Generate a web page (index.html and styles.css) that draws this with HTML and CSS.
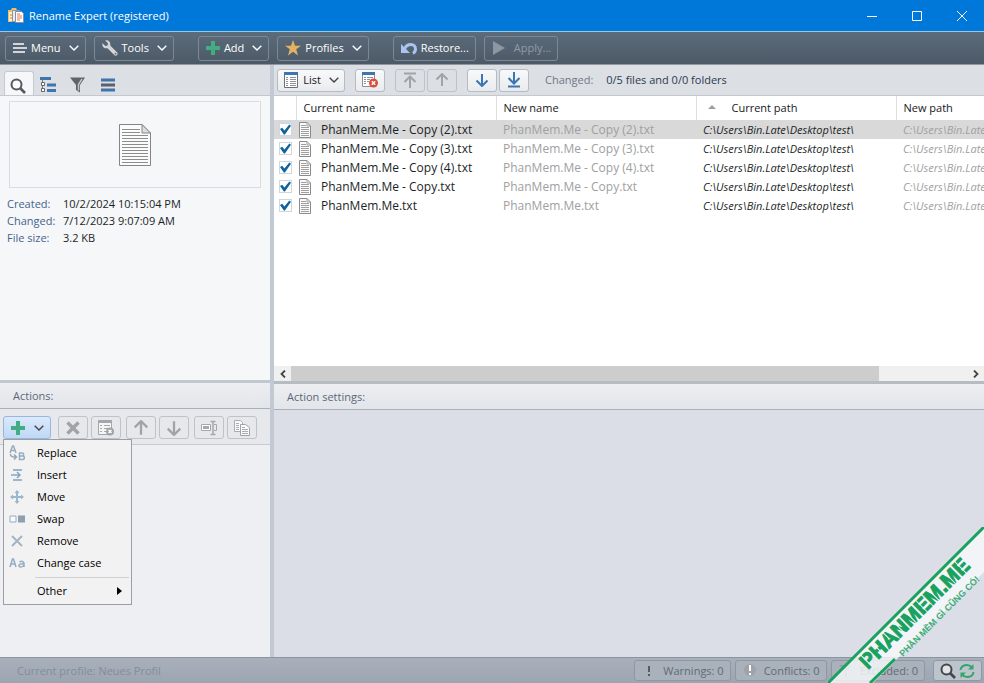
FILE: index.html
```
<!DOCTYPE html>
<html lang="en">
<head>
<meta charset="utf-8">
<title>Rename Expert</title>
<link rel="stylesheet" href="styles.css">
</head>
<body>
<svg class="defs" aria-hidden="true">
  <symbol id="chevron" viewBox="0 0 10 6"><path d="M.7.7 5 5 9.300.7" fill="none" stroke="currentColor" stroke-width="1.400"/></symbol>
  <symbol id="file" viewBox="0 0 32 42"><path d="M.5.5H23l8.500 8.500v32.500H.5z" fill="#fbfbfb" stroke="#858585"/><path d="M23 .5V9h8.500z" fill="#ddd" stroke="#858585"/><path d="M3 5.500h18M3 8.500h18M3 11.500h26M3 14.500h26M3 17.500h26M3 20.500h26M3 23.500h26M3 26.500h26M3 29.500h26M3 32.500h26M3 35.500h26M3 38.500h26" stroke="#8d8d8d"/></symbol>
  <symbol id="smallfile" viewBox="0 0 12 16"><path d="M.5.5H8l3.500 3.500v11.500H.5z" fill="#fafafa" stroke="#8b8b8b"/><path d="M8 .5V4h3.500M2 3.500h5M2 5.500h8M2 7.500h8M2 9.500h8M2 11.500h8M2 13.500h8" fill="none" stroke="#a0a0a0"/></symbol>
  <symbol id="plus" viewBox="0 0 14 14"><path d="M5 0h4v5h5v4H9v5H5V9H0V5h5z" fill="#41ad80"/></symbol>
  <symbol id="arrow" viewBox="0 0 14 14"><path d="M7 1v12M1.500 7.500 7 13l5.500-5.500" fill="none" stroke="currentColor" stroke-width="2"/></symbol>
  <symbol id="arrowline" viewBox="0 0 14 16"><path d="M7 0v12M1.500 6 7 11.500 12.500 6M1 14.500h12" fill="none" stroke="currentColor" stroke-width="2"/></symbol>
  <symbol id="lens" viewBox="0 0 16 16"><circle cx="6.500" cy="6.500" r="5" fill="#ffffff88" stroke="currentColor" stroke-width="2"/><path d="m10 10 5 5" stroke="currentColor" stroke-width="2.600"/></symbol>
</svg>

<div class="window">
  <header class="titlebar">
    <svg class="appicon" viewBox="0 0 16 16"><path d="M0 2h3l1-2h4l1 2v12H0z" fill="#f3bd65"/><path d="M1 4h3v9H1z" fill="#fff1cf"/><path d="M4.500 2.500h7v11h-7z" fill="#e8edf5" stroke="#8b94a8"/><path d="M7.500 3.500h6l2 2v9h-8z" fill="#fff" stroke="#8b8d9c"/><path d="M9 6h3M9 8h5M9 10h5M9 12h3" stroke="#d87a59"/><path d="M2 7h3M2 10h3" stroke="#c4843c"/></svg>
    <h1>Rename Expert (registered)</h1>
    <div class="caption">
      <button aria-label="Minimize"><svg viewBox="0 0 10 10"><path d="M0 5.500h10" stroke="#fff"/></svg></button>
      <button aria-label="Maximize"><svg viewBox="0 0 10 10"><path d="M.5.5h9v9h-9z" fill="none" stroke="#fff"/></svg></button>
      <button aria-label="Close"><svg viewBox="0 0 10 10"><path d="m0 0 10 10M10 0 0 10" stroke="#fff"/></svg></button>
    </div>
  </header>

  <nav class="mainbar">
    <button class="dark"><svg class="i14" viewBox="0 0 14 14"><path d="M0 3h11M0 7h14M0 11h12" stroke="#d2d6da" stroke-width="2"/></svg>Menu<svg class="chev"><use href="#chevron"/></svg></button>
    <button class="dark"><svg class="i16" viewBox="0 0 16 16"><path d="M3.200.6 6 3.300 5.600 5.500l-2.200.4L.6 3.200C-.4 6 1.500 8.800 5.500 8.300l7 7c1.800 1.400 4-1 2.700-2.700l-7-7C9 2 6.200-.5 3.200.6z" fill="#d4d5d8"/><circle cx="13.500" cy="13.700" r=".9" fill="#596675"/></svg>Tools<svg class="chev"><use href="#chevron"/></svg></button>
    <button class="dark gap"><svg class="i14"><use href="#plus"/></svg>Add<svg class="chev"><use href="#chevron"/></svg></button>
    <button class="dark near"><svg class="i16" viewBox="0 0 16 16"><path d="m8 0 2 5.700h6l-4.800 3.600L13 15.500 8 11.800l-5 3.700 1.800-6.200L0 5.700h6z" fill="#e3b264"/></svg>Profiles<svg class="chev"><use href="#chevron"/></svg></button>
    <button class="dark gap"><svg class="i16" viewBox="0 0 16 16"><path d="M3.500 9C6 3 14.500 3 14.500 9c0 2-1 3.500-2.500 4.500" fill="none" stroke="#a9c4ef" stroke-width="3"/><path d="M0 4v9h9z" fill="#a9c4ef"/></svg>Restore...</button>
    <button class="dark near" disabled><svg class="i14" viewBox="0 0 14 14"><path d="M1 0v14l12-7z" fill="#8e969f"/></svg><span class="apply">Apply...</span></button>
  </nav>

  <main class="work">
    <section class="side">
      <div class="info">
        <div class="tabs">
          <button class="tab on" aria-label="Preview"><svg class="i16"><use href="#lens"/></svg></button>
          <button class="tab" aria-label="Tree"><svg class="i16" viewBox="0 0 16 16"><path d="M0 1.500h11" stroke="#3f74ae" stroke-width="3"/><path d="M2.500 3v10.500H5M2.500 8H5" fill="none" stroke="#777"/><path d="M1.500 5.500h3v3h-3zM1.500 11.500h3v3h-3z" fill="#fff" stroke="#666"/><path d="M7 8h9M7 13.500h9" stroke="#3f74ae" stroke-width="3"/></svg></button>
          <button class="tab" aria-label="Filter"><svg class="i16" viewBox="0 0 16 16"><path d="M0 .5h15L10 8v7.500L6 13V8z" fill="#606468"/><path d="M12 2 8.500 7.500v6" fill="none" stroke="#c2c5c8" stroke-width="1.500"/></svg></button>
          <button class="tab" aria-label="Lines"><svg class="i14" viewBox="0 0 14 14"><path d="M0 2h14M0 12h14" stroke="#3f74ae" stroke-width="3"/><path d="M0 7h14" stroke="#5c6167" stroke-width="3"/></svg></button>
        </div>
        <div class="preview"><svg><use href="#file"/></svg></div>
        <dl class="facts">
          <dt>Created:</dt><dd>10/2/2024 10:15:04 PM</dd>
          <dt>Changed:</dt><dd>7/12/2023 9:07:09 AM</dd>
          <dt>File size:</dt><dd>3.2 KB</dd>
        </dl>
      </div>
      <div class="actions">
        <h2 class="panehead first">Actions:</h2>
        <div class="actionbar">
          <div class="addwrap">
            <button class="tool addaction" aria-label="Add action"><svg class="i14"><use href="#plus"/></svg><svg class="chev"><use href="#chevron"/></svg></button>
            <div class="menu" role="menu">
              <button role="menuitem"><svg viewBox="0 0 16 16"><path d="m1 8 2.500-7h1L7 8M2 5.500h4" fill="none" stroke="#94adc3" stroke-width="1.500"/><path d="M1.500 9c0 3 2 3 5 3M5 9.500 7.500 12 5 14.500" fill="none" stroke="#9aa4ad" stroke-width="1.500"/><path d="M10.500 8v6.500h3c2.500 0 2.500-3.500 0-3.500h-3 2.500c2.500 0 2-3 0-3z" fill="none" stroke="#94adc3" stroke-width="1.500"/></svg>Replace</button>
              <button role="menuitem"><svg viewBox="0 0 16 16"><path d="M4 3h9M4 13h9" stroke="#9cb7cd" stroke-width="2"/><path d="M2 8h9M8 5l3 3-3 3" fill="none" stroke="#89a7c0" stroke-width="1.500"/></svg>Insert</button>
              <button role="menuitem"><svg viewBox="0 0 16 16"><path d="M8 2v12M2 8h12" stroke="#9bb8cf" stroke-width="2"/><path d="m5.500 4L8 1l2.500 3zM5.500 12 8 15l2.500-3zM4 5.500 1 8l3 2.500zM12 5.500 15 8l-3 2.500z" fill="#9bb8cf"/></svg>Move</button>
              <button role="menuitem"><svg viewBox="0 0 16 16"><path d="M1 5h6v6H1z" fill="#f8fafc" stroke="#91aec6"/><path d="M9 4.500h7v7H9z" fill="#8f9fad"/></svg>Swap</button>
              <button role="menuitem"><svg viewBox="0 0 16 16"><path d="m3 3 10 10M13 3 3 13" stroke="#a3b5c4" stroke-width="2"/></svg>Remove</button>
              <button role="menuitem"><svg viewBox="0 0 16 16"><path d="m1 12 2.500-8h1L7 12M2 9h4M10.500 7c3-1.500 4.500 0 4.500 1.500V12M15 9c-6-1-6 3-3.500 3S15 10 15 10" fill="none" stroke="#94adc3" stroke-width="1.500"/></svg>Change case</button>
              <hr>
              <button role="menuitem"><svg viewBox="0 0 16 16"></svg>Other<span class="sub"></span></button>
            </div>
          </div>
          <button class="tool off gap4" aria-label="Delete"><svg class="i14" viewBox="0 0 14 14"><path d="m1.500 1.500 11 11M12.500 1.500l-11 11" stroke="#a0a3a7" stroke-width="3.500"/></svg></button>
          <button class="tool off" aria-label="Clear"><svg class="i16" viewBox="0 0 16 16"><path d="M.5.5h13v14H.5z" fill="#f5f5f5" stroke="#a4a8ac"/><path d="M0 1.500h14" stroke="#a4a8ac" stroke-width="3"/><path d="M2 5.500h2M6 5.500h6M2 8.500h2M6 8.500h4M2 11.500h2M6 11.500h2" stroke="#a4a8ac"/><circle cx="12" cy="11.500" r="4" fill="#a0a4a8"/><path d="m10.500 10 3 3M13.500 10l-3 3" stroke="#fff" stroke-width="1.300"/></svg></button>
          <button class="tool off gap2" aria-label="Move up"><svg class="i16 flip"><use href="#arrow"/></svg></button>
          <button class="tool off" aria-label="Move down"><svg class="i16"><use href="#arrow"/></svg></button>
          <button class="tool off gap2" aria-label="Rename"><svg class="i16" viewBox="0 0 16 16"><path d="M.5 4.500h9v6h-9z" fill="#fff" stroke="#a4a8ac"/><path d="M2 7.500h6" stroke="#a4a8ac" stroke-width="3"/><path d="M9.500 1.500h5M9.500 14.500h5M12 2v12" stroke="#a4a8ac" stroke-width="1.500"/><path d="M13 4.500h2.500v6H13" fill="none" stroke="#a4a8ac"/></svg></button>
          <button class="tool off" aria-label="Copy"><svg class="i16" viewBox="0 0 16 16"><path d="M.5.5h6l2 2v9h-8z" fill="#fafafa" stroke="#a9adb1"/><path d="M2 3.500h3M2 5.500h3M2 7.500h3M2 9.500h3" stroke="#a9adb1"/><path d="M6.500 4.500h5l4 3v8h-9z" fill="#fafafa" stroke="#a0a4a8"/><path d="M8 7.500h3M8 9.500h6M8 11.500h6M8 13.500h6" stroke="#a9adb1"/></svg></button>
        </div>
      </div>
    </section>

    <section class="content">
      <div class="files">
        <div class="listbar">
          <button class="tool wide"><svg class="i16" viewBox="0 0 16 16"><path d="M1.500.5h13v15h-13z" fill="#fff" stroke="#687078"/><path d="M1 1.500h14" stroke="#3f74ae" stroke-width="3"/><path d="M3 5.500h2M7 5.500h6M3 7.500h2M7 7.500h6M3 9.500h2M7 9.500h6M3 11.500h2M7 11.500h6M3 13.500h2M7 13.500h6" stroke="#8c9298"/></svg>List<svg class="chev"><use href="#chevron"/></svg></button>
          <button class="tool gap10" aria-label="Clear list"><svg class="i16" viewBox="0 0 16 16"><path d="M.5.5h12v14H.5z" fill="#fff" stroke="#889098"/><path d="M0 1.500h13" stroke="#3f74ae" stroke-width="3"/><path d="M2 5.500h2M5 5.500h6M2 7.500h2M5 7.500h3M2 9.500h2M5 9.500h2M2 11.500h2" stroke="#8c9298"/><circle cx="11.500" cy="11" r="4.500" fill="#dc4b38"/><path d="m9.800 9.300 3.400 3.400M13.200 9.300l-3.400 3.400" stroke="#fff" stroke-width="1.500"/></svg></button>
          <button class="tool off gap10" aria-label="To top"><svg class="i16 flip"><use href="#arrowline"/></svg></button>
          <button class="tool off tight" aria-label="Up"><svg class="i14 flip"><use href="#arrow"/></svg></button>
          <button class="tool blue gap10" aria-label="Down"><svg class="i14"><use href="#arrow"/></svg></button>
          <button class="tool blue tight" aria-label="To bottom"><svg class="i16"><use href="#arrowline"/></svg></button>
          <p class="changed">Changed: <strong>0/5 files and 0/0 folders</strong></p>
        </div>
        <div class="tablewrap">
          <table>
            <colgroup><col class="c-check"><col class="c-text"><col class="c-text"><col class="c-text"><col class="c-last"></colgroup>
            <thead><tr><th></th><th>Current name</th><th>New name</th><th><span class="sort"></span>Current path</th><th>New path</th></tr></thead>
            <tbody>
              <tr class="sel"><td><input type="checkbox" checked aria-label="Include copy 2"></td><td><span class="name"><svg><use href="#smallfile"/></svg>PhanMem.Me - Copy (2).txt</span></td><td class="dim">PhanMem.Me - Copy (2).txt</td><td class="path">C:\Users\Bin.Late\Desktop\test\</td><td class="path dim">C:\Users\Bin.Late\Desktop\test\</td></tr>
              <tr><td><input type="checkbox" checked aria-label="Include copy 3"></td><td><span class="name"><svg><use href="#smallfile"/></svg>PhanMem.Me - Copy (3).txt</span></td><td class="dim">PhanMem.Me - Copy (3).txt</td><td class="path">C:\Users\Bin.Late\Desktop\test\</td><td class="path dim">C:\Users\Bin.Late\Desktop\test\</td></tr>
              <tr><td><input type="checkbox" checked aria-label="Include copy 4"></td><td><span class="name"><svg><use href="#smallfile"/></svg>PhanMem.Me - Copy (4).txt</span></td><td class="dim">PhanMem.Me - Copy (4).txt</td><td class="path">C:\Users\Bin.Late\Desktop\test\</td><td class="path dim">C:\Users\Bin.Late\Desktop\test\</td></tr>
              <tr><td><input type="checkbox" checked aria-label="Include copy"></td><td><span class="name"><svg><use href="#smallfile"/></svg>PhanMem.Me - Copy.txt</span></td><td class="dim">PhanMem.Me - Copy.txt</td><td class="path">C:\Users\Bin.Late\Desktop\test\</td><td class="path dim">C:\Users\Bin.Late\Desktop\test\</td></tr>
              <tr><td><input type="checkbox" checked aria-label="Include original"></td><td><span class="name"><svg><use href="#smallfile"/></svg>PhanMem.Me.txt</span></td><td class="dim">PhanMem.Me.txt</td><td class="path">C:\Users\Bin.Late\Desktop\test\</td><td class="path dim">C:\Users\Bin.Late\Desktop\test\</td></tr>
            </tbody>
          </table>
        </div>
        <div class="scroll">
          <button aria-label="Scroll left"><svg viewBox="0 0 6 8"><path d="M5 .5 1.500 4 5 7.500" fill="none" stroke="#444" stroke-width="1.800"/></svg></button>
          <div class="track"><div class="thumb"></div></div>
          <button aria-label="Scroll right"><svg viewBox="0 0 6 8"><path d="M1 .5 4.500 4 1 7.500" fill="none" stroke="#444" stroke-width="1.800"/></svg></button>
        </div>
      </div>
      <div class="settings"><h2 class="panehead">Action settings:</h2></div>
    </section>
  </main>

  <footer class="status">
    <p>Current profile: Neues Profil</p>
    <button class="stat"><svg class="i16" viewBox="0 0 16 16"><path d="M8 3v6M8 11v2" stroke="#555c63" stroke-width="2"/></svg>Warnings: 0</button>
    <button class="stat"><svg class="i16" viewBox="0 0 16 16"><circle cx="8" cy="7" r="6" fill="#a0a2a9"/><path d="M8 2v6M8 10v2" stroke="#fff" stroke-width="2"/></svg>Conflicts: 0</button>
    <button class="stat"><svg class="i16" viewBox="0 0 16 16"><path d="M1 2h13L9 8v6H7V8z" fill="#929ca7"/></svg>Excluded: 0</button>
    <button class="stat last" aria-label="Refresh preview"><svg class="i16"><use href="#lens"/></svg><svg class="i16" viewBox="0 0 16 16"><path d="M1.500 7C2 2 9 0 13 4.500M14.500 9c-.5 5-7.500 7-11.500 2.500" fill="none" stroke="#35a36f" stroke-width="2"/><path d="M14.500 1v5.500H9zM1.500 15V9.500H7z" fill="#35a36f"/></svg></button>
  </footer>

  <svg class="ribbon" viewBox="0 0 156 156">
    <path d="M0 156 156 0v45L45 156z" fill="#f7f9fa" fill-opacity=".82"/>
    <path d="M0 156 156 0M42 156l25-24" stroke="#18a15f" stroke-width="3"/>
    <g transform="translate(40 143) rotate(-45)"><text class="brand">PHANMEM.ME</text><path d="M5.500-16V1M22-16V1M37-16v7M52-16V1M67.500-16V1M83-16V1M99.500-16V1M123-16V1M138-16V1" stroke="#f4f7f7"/></g>
    <g transform="translate(75 130) rotate(-45)"><text class="motto">PHẦN MỀM GÌ CŨNG CÓ!</text></g>
  </svg>
</div>
</body>
</html>
```
FILE: styles.css
```
* { box-sizing: border-box; }
body { margin: 0; font: 11px/16px "Open Sans", "Noto Sans", sans-serif; color: #1b1f26; }
h1, h2, p, dl, dd { margin: 0; font-size: 11px; font-weight: 400; }
button { font: inherit; color: inherit; padding: 0; border: 0; background: none; }
svg { flex: none; display: block; }
.defs { position: absolute; width: 0; height: 0; }
.i14 { width: 14px; height: 14px; }
.i16 { width: 16px; height: 16px; }
.chev { width: 10px; height: 6px; }
.flip { transform: scaleY(-1); }

.window { position: relative; display: flex; flex-direction: column; height: 100vh; overflow: hidden; background: #dcdfe6; }

.titlebar { display: flex; align-items: center; height: 32px; padding-left: 8px; background: #0078d9; border-bottom: 1px solid #9cc6e6; color: #fff; }
.appicon { width: 16px; height: 16px; margin-right: 5px; }
.caption { display: flex; margin-left: auto; }
.caption button { width: 45px; height: 30px; display: grid; place-items: center; }
.caption svg { width: 10px; height: 10px; }

.mainbar { display: flex; align-items: center; height: 33px; padding: 0 5px; background: linear-gradient(#5c6c7b, #4c5967); border-bottom: 1px solid #8f98a2; }
.dark { display: flex; align-items: center; gap: 4px; height: 25px; padding: 0 6px 0 7px; border: 1px solid #7c8894; border-radius: 3px; color: #fff; }
.dark + .dark { margin-left: 8px; }
.dark + .gap { margin-left: 24px; }
.dark .chev { margin-left: 4px; }
.dark:disabled { color: #929ba5; }
.apply { margin-left: 4px; }

.work { flex: 1; min-height: 0; display: grid; grid-template-columns: 274px minmax(0, 1fr); }
.side { display: grid; grid-template-rows: minmax(0, 318fr) minmax(0, 274fr); border-right: 4px solid #c3c9d2; background: #eeeff2; }
.info { background: #f5f7f9; border-bottom: 3px solid #c1c7cf; overflow: hidden; }
.tabs { display: flex; align-items: flex-end; height: 31px; padding: 0 4px; background: #dcdfe4; border-bottom: 1px solid #c3c8cf; }
.tab { display: grid; place-items: center; width: 30px; height: 24px; padding: 4px 2px 0 0; color: #55585c; }
.tab.on { background: #f5f7f9; border: 1px solid #c6cbd1; border-bottom: 0; border-radius: 3px 3px 0 0; }
.preview { display: grid; place-items: center; height: 87px; margin: 5px 9px 7px; border: 1px solid #d9dce1; }
.preview svg { width: 32px; height: 42px; }
.facts { display: grid; grid-template-columns: 56px 1fr; padding-left: 7px; line-height: 17px; }
.facts dt { color: #46638d; }

.panehead { height: 26px; padding: 0 13px; line-height: 26px; color: #5d6876; background: linear-gradient(#eceef2, #e2e5e9); border-bottom: 1px solid #a9b0b8; }
.actionbar { display: flex; align-items: center; gap: 3px; height: 36px; padding: 2px 3px 0; background: #e6e8ec; border-bottom: 1px solid #c5cad1; }
.tool { display: flex; align-items: center; justify-content: center; gap: 5px; width: 30px; height: 23px; border: 1px solid #b5bbc3; border-radius: 3px; background: linear-gradient(#f8f9fa, #e9ebee); color: #15181c; }
.off { background: none; border-color: #bec3ca; color: #a0a4a8; }
.blue { color: #3876b4; }
.wide { width: 68px; gap: 4px; }
.wide .chev { margin-left: 4px; color: #444; }
.gap2 { margin-left: 2px; }
.gap4 { margin-left: 4px; }
.gap10 { margin-left: 10px; }
.tight { margin-left: 2px; }
.addwrap { position: relative; }
.addaction { width: 48px; gap: 9px; border-color: #96b8dc; background: linear-gradient(#dbe9fb, #bfd8f6); color: #444; }
.menu { position: absolute; left: 0; top: 100%; z-index: 2; width: 129px; padding: 2px 1px 2px; background: #f2f2f2; border: 1px solid #9b9ea2; }
.menu button { display: flex; align-items: center; gap: 12px; width: 100%; height: 22px; padding-left: 4px; color: #000; }
.menu svg { width: 16px; height: 16px; }
.menu hr { margin: 3px 1px 2px 30px; border: 0; border-top: 1px solid #d0d0d0; }
.sub { margin: 0 8px 0 auto; border: 4px solid transparent; border-left: 5px solid #000; border-right: 0; }

.content { display: grid; grid-template-columns: minmax(0, 1fr); grid-template-rows: minmax(0, 319fr) minmax(0, 273fr); }
.files { display: flex; flex-direction: column; min-height: 0; background: #fff; border-bottom: 3px solid #b5bcc4; }
.listbar { display: flex; align-items: center; height: 31px; flex: none; padding: 0 3px; background: #dcdfe4; border-bottom: 1px solid #c3c8cf; }
.changed { margin-left: 16px; color: #6f7884; }
.changed strong { margin-left: 10px; font-weight: 400; color: #2c3a50; }
.tablewrap { flex: 1; min-height: 0; overflow: hidden; }
table { width: 822px; table-layout: fixed; border-collapse: collapse; }
.c-check { width: 22px; }
.c-text { width: 200px; }
th { height: 24px; padding: 0 0 0 7px; text-align: left; font-weight: 400; color: #15181c; border-right: 1px solid #dedede; }
td { height: 19px; padding: 0 0 0 7px; white-space: nowrap; font-size: 12px; }
td:first-child { padding: 0 0 0 5px; }
td:nth-child(2) { padding-left: 3px; }
.sel { background: #d9d9d9; }
.name { display: flex; align-items: center; gap: 10px; }
.name svg { width: 12px; height: 16px; }
.dim { color: #a0a0a0; }
.path { font-size: 11px; font-style: italic; }
.sort { display: inline-block; margin: 0 16px 3px 4px; border: 4px solid transparent; border-top: 0; border-bottom-color: #98a2a5; }
input { appearance: none; display: block; width: 13px; height: 13px; margin: 0; background: #fff; border: 1px solid #cfd6dc; }
input:checked::before { content: ""; display: block; width: 11px; height: 11px; background: #0f629e; clip-path: polygon(0 45%, 20% 35%, 40% 60%, 85% 5%, 100% 15%, 45% 95%, 35% 95%); }
.scroll { display: flex; flex: none; height: 15px; background: #f0f0f0; }
.scroll button { width: 17px; display: grid; place-items: center; }
.scroll button svg { width: 6px; height: 8px; }
.track { flex: 1; }
.thumb { width: 87%; height: 100%; background: #cdcdcd; }
.settings { background: #dbdee6; }

.status { display: flex; align-items: center; gap: 4px; height: 26px; padding: 0 2px 0 17px; background: linear-gradient(#a8b0bb, #9ba5b1); border-top: 1px solid #8c949e; }
.status p { margin-right: auto; color: #848d98; }
.stat { display: flex; align-items: center; gap: 6px; height: 21px; padding: 0 6px; border: 1px solid #8e98a3; border-radius: 3px; background: #a9b1bb; color: #616b77; }
.stat.last { gap: 3px; margin-left: 4px; background: #bec4cb; color: #43474c; }

.ribbon { position: absolute; right: 0; bottom: 0; width: 156px; height: 156px; z-index: 3; pointer-events: none; }
.brand { font: 700 21px "Liberation Sans", sans-serif; fill: #18a15f; stroke: #18a15f; }
.motto { font: 700 9px "Liberation Sans", sans-serif; fill: #3bad78; }
```
